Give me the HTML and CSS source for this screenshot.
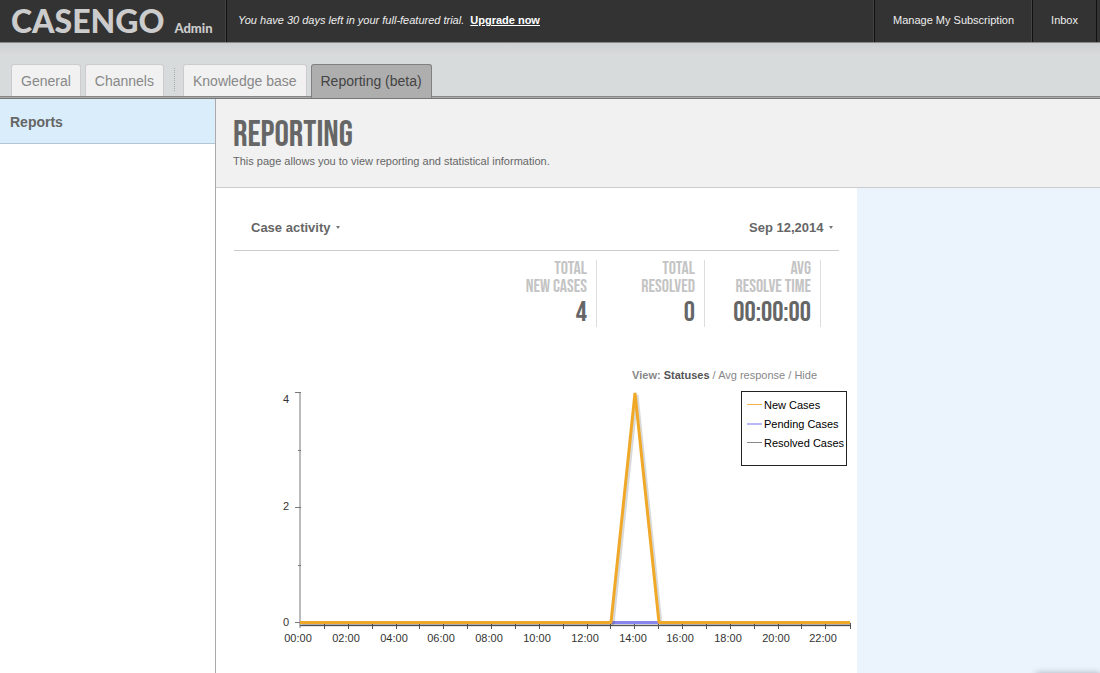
FILE: index.html
```html
<!DOCTYPE html>
<html lang="en">
<head>
<meta charset="utf-8">
<title>Casengo Admin - Reporting</title>
<link rel="stylesheet" href="styles.css">
</head>
<body>
<header class="topbar">
  <div class="brand"><span class="brand-name">CASENGO</span><span class="brand-role">Admin</span></div>
  <p class="trial"><em>You have 30 days left in your full-featured trial.</em><a href="#upgrade">Upgrade now</a></p>
  <nav class="topnav"><a href="#subscription">Manage My Subscription</a><a href="#inbox">Inbox</a></nav>
</header>
<nav class="tabs">
  <a class="tab" href="#general">General</a>
  <a class="tab" href="#channels">Channels</a>
  <span class="tab-divider"></span>
  <a class="tab" href="#kb">Knowledge base</a>
  <a class="tab active" href="#reporting">Reporting (beta)</a>
</nav>
<div class="page">
  <aside class="sidebar"><a href="#reports">Reports</a></aside>
  <main class="main">
    <header class="intro">
      <h1>REPORTING</h1>
      <p>This page allows you to view reporting and statistical information.</p>
    </header>
    <div class="columns">
      <section class="report">
        <div class="filters">
          <label class="picker"><select aria-label="Report"><option>Case activity</option></select></label>
          <label class="picker"><select aria-label="Date"><option>Sep 12,2014</option></select></label>
        </div>
        <dl class="stats">
          <div><dt>TOTAL<br>NEW CASES</dt><dd>4</dd></div>
          <div><dt>TOTAL<br>RESOLVED</dt><dd>0</dd></div>
          <div><dt>AVG<br>RESOLVE TIME</dt><dd>00:00:00</dd></div>
        </dl>
        <p class="views"><b>View:</b> <a class="current" href="#statuses">Statuses</a> / <a href="#avg">Avg response</a> / <a href="#hide">Hide</a></p>
        <figure class="chart">
          <svg viewBox="0 0 641 288" role="img" aria-label="Cases per hour">
            <path class="axis-shade" d="M84 239.500H635"/>
            <path class="axis" d="M84 7V243M79 7.500H85M79 122.500H85M79 237.500H85M82 65.500H85M82 180.500H85"/>
            <path class="ticks" d="M84 240.500H635M108.500 238v6M132.500 238v6M156.500 238v6M180.500 238v6M203.500 238v6M227.500 238v6M251.500 238v6M275.500 238v6M299.500 238v6M323.500 238v6M347.500 238v6M371.500 238v6M394.500 238v6M418.500 238v6M442.500 238v6M466.500 238v6M490.500 238v6M514.500 238v6M538.500 238v6M562.500 238v6M585.500 238v6M609.500 238v6M634.500 238v6"/>
            <path class="pending" d="M84 237.500H634"/>
            <path class="shade" d="M86 239H397L421 10L445 239H634"/>
            <path class="new" d="M84 237.500H395L419 8L443 237.500H634"/>
            <g class="ylabels"><text x="73" y="18">4</text><text x="73" y="125">2</text><text x="73" y="241">0</text></g>
            <g class="xlabels">
              <text x="82" y="257">00:00</text><text x="130" y="257">02:00</text><text x="178" y="257">04:00</text><text x="225" y="257">06:00</text><text x="273" y="257">08:00</text><text x="321" y="257">10:00</text><text x="369" y="257">12:00</text><text x="417" y="257">14:00</text><text x="464" y="257">16:00</text><text x="512" y="257">18:00</text><text x="560" y="257">20:00</text><text x="607" y="257">22:00</text>
            </g>
          </svg>
          <ul class="legend">
            <li class="key-new">New Cases</li>
            <li class="key-pending">Pending Cases</li>
            <li class="key-resolved">Resolved Cases</li>
          </ul>
        </figure>
      </section>
      <aside class="extras"></aside>
    </div>
  </main>
</div>
</body>
</html>
```

FILE: styles.css
```css
* { box-sizing: border-box; }
body {
  margin: 0;
  min-height: 100vh;
  display: flex;
  flex-direction: column;
  background: #fff;
  color: #666;
  font: 11px/14px "Liberation Sans", Arial, sans-serif;
}
a { color: inherit; text-decoration: none; }
p, dl, dd, ul, figure, h1 { margin: 0; padding: 0; }

.topbar {
  display: flex;
  height: 43px;
  background: #333;
  border-bottom: 1px solid #888;
  color: #eee;
}
.brand {
  width: 227px;
  padding-left: 11px;
  border-right: 1px solid #111;
  box-shadow: inset -1px 0 #444;
  display: flex;
  align-items: baseline;
  gap: 10px;
  color: #ccc;
  font-family: Lato, sans-serif;
  font-weight: 900;
  line-height: 42px;
}
.brand-name { font-size: 32px; }
.brand-role { font-size: 13px; }
.trial { flex: 1; padding: 13px 11px; }
.trial a { margin-left: 6px; color: #fff; font-weight: bold; text-decoration: underline; }
.topnav { display: flex; border-right: 1px solid #111; margin-right: 3px; }
.topnav a { padding: 13px 18px; border-left: 1px solid #111; box-shadow: -1px 0 #444; }

.tabs {
  display: flex;
  align-items: flex-end;
  gap: 4px;
  height: 56px;
  padding: 0 11px;
  border-bottom: 1px solid #777;
  background: linear-gradient(#888 0 1px, #aaa 1px) bottom / 100% 2px no-repeat, linear-gradient(#ced0d1, #d8dbdc 12px);
}
.tab {
  height: 32px;
  margin-bottom: 2px;
  padding: 0 9px;
  border: 1px solid #ccc;
  border-bottom: 0;
  border-radius: 3px 3px 0 0;
  background: #f1f1f1;
  color: #888;
  font-size: 14px;
  line-height: 33px;
}
.tab.active { height: 34px; margin-bottom: 0; background: #aeaeae; border-color: #808080; color: #444; }
.tab-divider { height: 23px; margin: 0 4px 7px 6px; border-left: 1px dotted #aaa; }

.page { flex: 1; display: flex; }
.sidebar { width: 216px; border-right: 1px solid #aaa; }
.sidebar a {
  display: block;
  height: 45px;
  padding-left: 10px;
  border-bottom: 1px solid #b0c6d6;
  background: #d9edfb;
  font-size: 14px;
  font-weight: bold;
  line-height: 46px;
}
.main { flex: 1; display: flex; flex-direction: column; min-width: 0; }
.intro { height: 89px; padding: 18px 17px; background: #f1f1f1; border-bottom: 1px solid #ccc; }
.intro h1, .stats { font-family: "Bebas Neue", "Roboto Condensed", "Liberation Sans", sans-serif; font-weight: normal; }
.intro h1 { font-size: 36px; line-height: 37px; }
.columns { flex: 1; display: flex; }
.report { flex: 641 1 0; min-width: 0; }
.extras {
  position: relative;
  overflow: hidden;
  flex: 243 1 0;
  background: #ebf3fc;
}
.extras::after {
  content: "";
  position: absolute;
  top: 100%;
  right: 0;
  width: 64px;
  height: 10px;
  box-shadow: 0 0 6px #a5b0bd;
}

.filters {
  display: flex;
  justify-content: space-between;
  height: 63px;
  margin: 0 18px;
  padding: 31px 6px 0 17px;
  border-bottom: 1px solid #ccc;
}
.picker { display: flex; height: 17px; align-items: center; gap: 5px; }
.picker::after { content: ""; border: solid transparent; border-width: 3px 2px 0; border-top-color: #777; }
.picker select {
  appearance: none;
  margin: 0;
  padding: 0;
  border: 0;
  background: none;
  color: #666;
  font: bold 13px/17px "Liberation Sans", Arial, sans-serif;
}
.stats { display: flex; justify-content: flex-end; padding: 9px 36px 0 0; text-align: right; }
.stats div { height: 67px; padding-right: 9px; border-right: 1px solid #ddd; }
.stats div + div { min-width: 108px; }
.stats div:last-child { min-width: 116px; }
.stats dt { color: #c4c4c4; font-size: 18px; line-height: 18px; }
.stats dd { font-size: 28px; line-height: 34px; }
.views { margin: 41px 40px 0 0; text-align: right; color: #888; }
.views .current { color: #555; font-weight: bold; }

.chart { position: relative; margin-top: 3px; }
.chart svg { display: block; width: 100%; }
.chart path { fill: none; }
.axis { stroke: #777; stroke-width: 1; }
.axis-shade { stroke: #ccc; stroke-width: 4; }
.ticks { stroke: #555; }
.chart .new { stroke: #f0a828; stroke-width: 3; stroke-linejoin: bevel; }
.pending { stroke: #8686ee; stroke-width: 3; }
.shade { stroke: #000; stroke-opacity: .15; stroke-width: 3; stroke-linejoin: bevel; }
.chart text { fill: #333; font-size: 11px; }
.ylabels { text-anchor: end; }
.xlabels { text-anchor: middle; }
.legend {
  position: absolute;
  top: 6px;
  right: 10px;
  width: 106px;
  height: 75px;
  padding: 3px 0 0 5px;
  border: 1px solid #222;
  background: #fff;
  color: #000;
  list-style: none;
  white-space: nowrap;
}
.legend li { display: flex; align-items: center; gap: 2px; height: 19px; }
.legend li::before { content: ""; width: 15px; height: 1px; }
.legend .key-new::before { background: #f5b54a; }
.legend .key-pending::before { height: 2px; background: #b9b9fa; }
.legend .key-resolved::before { background: #888; }
```
